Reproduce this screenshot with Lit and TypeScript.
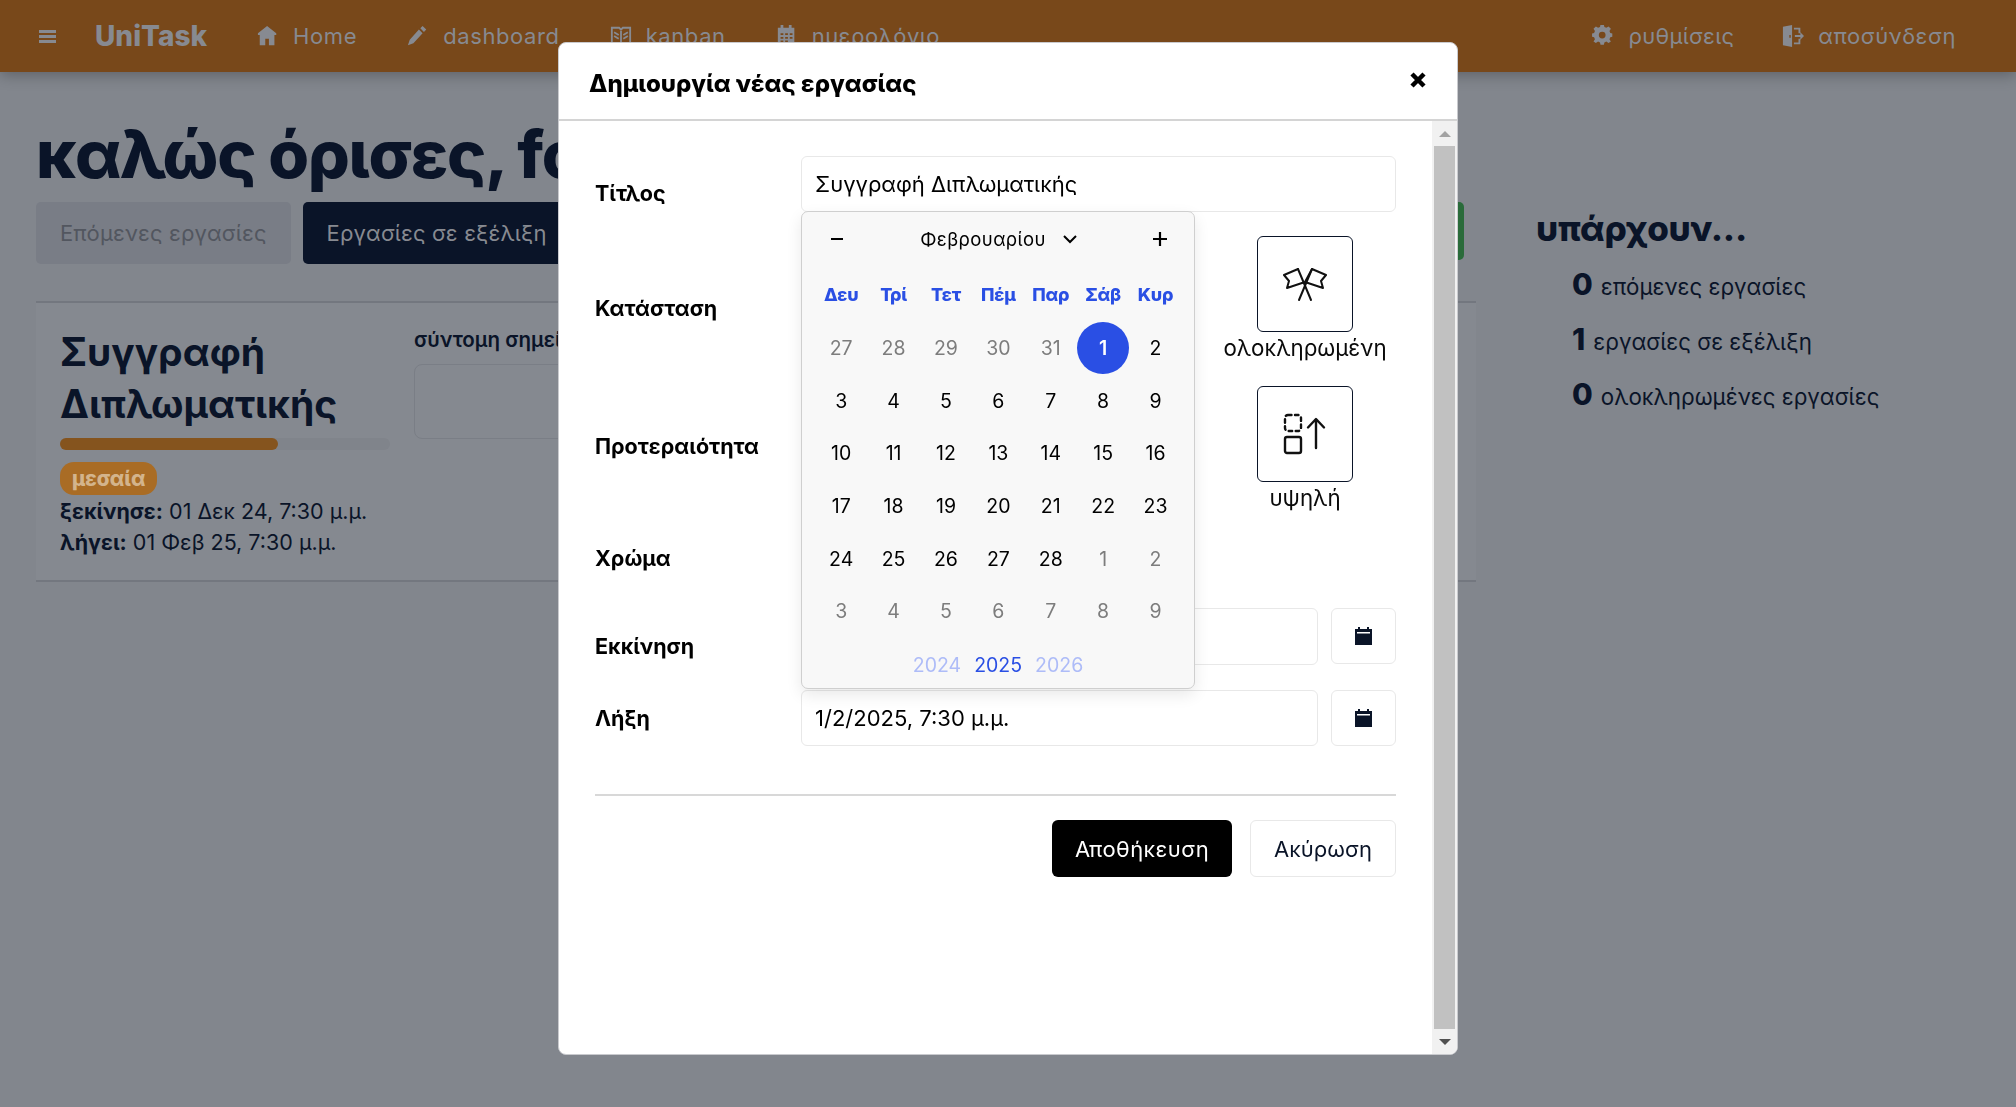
import { LitElement, html, css, svg } from 'lit';
import { customElement } from 'lit/decorators.js';
import { classMap } from 'lit/directives/class-map.js';

const FONT = css`Inter, "Noto Sans", sans-serif`;

const icons = {
  home: svg`<path d="M11 1 1 9v2h2v11h6v-7h4v7h6V11h2V9Z"/>`,
  pencil: svg`<path d="M17 1l4 4-2.5 2.5-4-4ZM13 5l4 4-10 11-6 2 2-6Z"/>`,
  book: svg`<path fill="none" stroke="currentColor" stroke-width="2" d="M2 3h8l2 2 2-2h8v18h-8l-2 1-2-1H2ZM12 5v16M4.500 8l5 3M4.500 12l5 3M19.500 8l-5 3M19.500 12l-5 3"/>`,
  calendar: svg`<path d="M5 0h3v3h6V0h3v3h3v19H2V3h3ZM5 9v2h3V9Zm5 0v2h3V9Zm5 0v2h3V9ZM5 13v2h3v-2Zm5 0v2h3v-2Zm5 0v2h3v-2ZM5 17v2h3v-2Zm5 0v2h3v-2Z"/>`,
  gear: svg`<path fill-rule="evenodd" d="M9 1h4l.6 3 2.300 1 2.600-1.700 2.800 2.800L19.600 8.700l1 2.300 2.400.6v4l-2.400.600-1 2.300 1.700 2.600-2.800 1.800-2.600-1.600-2.300 1-.6 2.700H9l-.6-2.700-2.300-1-2.600 1.600-2.800-1.800 1.700-2.600-1-2.300L-1 15.600v-4l2.400-.6 1-2.300L.7 6.100l2.800-2.800 2.600 1.700L8.400 4ZM11 9.500a4 4 0 1 0 0 8 4 4 0 0 0 0-8Z" transform="translate(1 -1.500) scale(.92 .92)"/>`,
  exit: svg`<path d="M1 2 11 0v24L1 22Zm7 9v3h1.500v-3ZM13 3h7v6h-2V5h-5ZM13 19h5v-4h2v6h-7ZM14 11h6V8l4 4-4 4v-3h-6Z"/>`,
};

const navIcon = (name: keyof typeof icons) =>
  html`<svg class="nav-icon" viewBox="0 0 24 24" fill="currentColor">${icons[name]}</svg>`;

const calendarGlyph = html`<svg class="cal-glyph" viewBox="0 0 17 18">
  <path fill="#0a1428" d="M3 0h2v2h7V0h2v2h3v16H0V2h3Z" />
  <rect x="2" y="5" width="13" height="1.500" fill="#fff" />
</svg>`;

@customElement('date-picker')
export class DatePicker extends LitElement {
  static styles = css`
    :host {
      display: block;
      box-sizing: border-box;
      width: 394px;
      height: 478px;
      padding: 0 13px;
      background: #f8f8f8;
      border: 1px solid #cfcfcf;
      border-radius: 7px;
      box-shadow: 0 6px 16px rgba(0, 0, 0, 0.09);
      font-family: ${FONT};
      color: #000;
    }
    .head {
      display: flex;
      align-items: center;
      justify-content: space-between;
      height: 54px;
      padding: 0 11px 0 12px;
      margin-bottom: 2px;
    }
    .step {
      width: 20px;
      height: 20px;
    }
    .month {
      display: flex;
      align-items: center;
      gap: 17px;
      font-size: 18.500px;
      letter-spacing: 0.4px;
    }
    .month svg {
      width: 14px;
      height: 9px;
    }
    .grid {
      display: grid;
      grid-template-columns: repeat(7, 52.400px);
      grid-template-rows: 53.500px;
      grid-auto-rows: 52.700px;
    }
    .weekday {
      display: flex;
      align-items: center;
      justify-content: center;
      height: 52px;
      font-size: 18px;
      font-weight: 800;
      color: #2a4fe4;
      letter-spacing: -0.2px;
    }
    .day {
      display: flex;
      align-items: center;
      justify-content: center;
      font-size: 19.500px;
    }
    .day.muted {
      color: #7d7d7d;
    }
    .day.selected {
      background: #2a4fe4;
      color: #fff;
      font-weight: 600;
      border-radius: 50%;
    }
    .years {
      display: flex;
      justify-content: center;
      gap: 13px;
      height: 54px;
      align-items: center;
      font-size: 19.500px;
      color: #aebcf8;
    }
    .years .current {
      color: #2a4fe4;
    }
  `;

  render() {
    const prev = [27, 28, 29, 30, 31];
    const month = Array.from({ length: 28 }, (_, i) => i + 1);
    const next = [1, 2, 3, 4, 5, 6, 7, 8, 9];
    return html`
      <div class="head">
        <svg class="step" viewBox="0 0 20 20"><path d="M4 10h12" stroke="#000" stroke-width="2.200" /></svg>
        <div class="month">
          Φεβρουαρίου
          <svg viewBox="0 0 14 9"><path d="M1 1l6 6 6-6" fill="none" stroke="#000" stroke-width="2" /></svg>
        </div>
        <svg class="step" viewBox="0 0 20 20"><path d="M3 10h14M10 3v14" stroke="#000" stroke-width="2.200" /></svg>
      </div>
      <div class="grid">
        ${['Δευ', 'Τρί', 'Τετ', 'Πέμ', 'Παρ', 'Σάβ', 'Κυρ'].map((d) => html`<div class="weekday">${d}</div>`)}
        ${prev.map((d) => html`<div class="day muted">${d}</div>`)}
        ${month.map((d) => html`<div class=${classMap({ day: true, selected: d === 1 })}>${d}</div>`)}
        ${next.map((d) => html`<div class="day muted">${d}</div>`)}
      </div>
      <div class="years">
        <span>2024</span><span class="current">2025</span><span>2026</span>
      </div>
    `;
  }
}

@customElement('app-root')
export class AppRoot extends LitElement {
  static styles = css`
    :host {
      display: block;
      font-family: ${FONT};
      color: #0a1428;
    }
    * {
      box-sizing: border-box;
    }
    .page {
      height: 1107px;
      overflow: hidden;
      background: #82868d;
    }
    .navbar {
      display: flex;
      align-items: center;
      height: 72px;
      padding: 0 60px 0 39px;
      background: #78481a;
      box-shadow: 0 3px 14px rgba(0, 0, 0, 0.28);
      color: #878a91;
      font-size: 22px;
      letter-spacing: 0.5px;
    }
    .burger {
      width: 17px;
      height: 13px;
      margin-right: 39px;
    }
    .brand {
      margin-right: 50px;
      font-size: 28px;
      font-weight: 800;
      letter-spacing: 0;
    }
    .nav-item {
      display: flex;
      align-items: center;
      gap: 14px;
      margin-right: 50px;
      white-space: nowrap;
    }
    .nav-item.latin {
      letter-spacing: 0.6px;
    }
    .nav-item.settings {
      margin-right: 48px;
      letter-spacing: 0.3px;
    }
    .nav-item.last {
      margin-right: 0;
    }
    .spacer {
      flex: 1;
    }
    .nav-icon {
      width: 22px;
      height: 22px;
    }
    .main {
      display: grid;
      grid-template-columns: 1440px 1fr;
      column-gap: 61px;
      padding: 41px 0 0 36px;
    }
    h1 {
      margin: 0 0 7px;
      font-size: 66px;
      line-height: 82px;
      font-weight: 800;
      letter-spacing: -1.300px;
      white-space: nowrap;
    }
    .tabs {
      display: flex;
      align-items: flex-start;
      gap: 12px;
      margin-bottom: 37px;
      padding-right: 12px;
    }
    .tab {
      display: flex;
      align-items: center;
      height: 62px;
      padding: 0 24px;
      border-radius: 5px;
      font-size: 22px;
      letter-spacing: 0.15px;
      white-space: nowrap;
    }
    .tab.next {
      background: #797d86;
      color: #52565f;
    }
    .tab.active {
      background: #0a1428;
      color: #878a91;
    }
    .tab.done {
      height: 58px;
      margin-left: auto;
      background: #2a6b3a;
      color: #878a91;
    }
    .card {
      display: flex;
      height: 281px;
      padding: 23px 24px;
      border-top: 2px solid #73777f;
      border-bottom: 2px solid #73777f;
      background: #858990;
    }
    .summary {
      width: 330px;
      margin-right: 24px;
    }
    .summary h2 {
      margin: 0 0 8px;
      font-size: 39px;
      line-height: 52px;
      font-weight: 700;
    }
    .track {
      height: 12px;
      margin-bottom: 12px;
      background: #80848b;
      border-radius: 6px;
    }
    .fill {
      height: 100%;
      background: #85541e;
      border-radius: 6px;
    }
    .badge {
      display: inline-block;
      height: 33px;
      padding: 0 12px;
      margin-bottom: 1px;
      border-radius: 14px;
      background: #a96c25;
      color: #d3b48c;
      font-size: 20.500px;
      line-height: 33px;
      font-weight: 800;
    }
    .date-line {
      font-size: 21.500px;
      line-height: 31px;
      white-space: nowrap;
    }
    .date-line b {
      font-weight: 700;
    }
    .note-title {
      margin-top: 1px;
      font-size: 20.500px;
      font-weight: 600;
      white-space: nowrap;
    }
    .note-box {
      width: 500px;
      height: 75px;
      margin-top: 12px;
      border: 1px solid #7a7e86;
      border-radius: 8px;
    }
    .side {
      padding-top: 93px;
      margin-left: -1px;
    }
    .side h2 {
      margin: 0 0 9px;
      font-size: 35px;
      line-height: 44px;
      font-weight: 800;
      letter-spacing: -0.3px;
    }
    .stat {
      display: flex;
      align-items: baseline;
      gap: 8px;
      height: 55px;
      padding-left: 36px;
      font-size: 22.300px;
      line-height: 50px;
      white-space: nowrap;
    }
    .stat b {
      font-size: 30px;
      font-weight: 800;
    }
    .modal-layer {
      position: fixed;
      inset: 0;
      display: flex;
      justify-content: center;
      align-items: flex-start;
      padding-top: 42px;
    }
    .modal {
      display: flex;
      flex-direction: column;
      width: 900px;
      height: 1013px;
      background: #fff;
      border: 1px solid #c9cace;
      border-radius: 8px;
      overflow: hidden;
      color: #000;
    }
    .modal-head {
      display: flex;
      align-items: flex-start;
      justify-content: space-between;
      flex: none;
      height: 78px;
      padding: 26px 29px 0 30px;
      border-bottom: 2px solid #d4d4d4;
    }
    .modal-title {
      font-size: 24px;
      line-height: 30px;
      font-weight: 800;
    }
    .close {
      width: 18px;
      height: 18px;
      margin-top: 2px;
      margin-right: 1px;
    }
    .modal-body {
      display: flex;
      flex: 1;
      min-height: 0;
    }
    .form {
      position: relative;
      flex: 1;
      padding: 35px 36px 0 36px;
    }
    .row {
      display: grid;
      grid-template-columns: 206px 1fr;
      margin-bottom: 24px;
    }
    .row.wide-gap {
      margin-bottom: 25px;
    }
    .label {
      font-size: 21.500px;
      line-height: 28px;
      font-weight: 700;
    }
    .lift-title {
      padding-top: 23px;
    }
    .lift-status {
      padding-top: 58px;
    }
    .lift-priority {
      padding-top: 46px;
    }
    .lift-color {
      padding-top: 8px;
    }
    .lift-start {
      padding-top: 24px;
    }
    .lift-end {
      padding-top: 14px;
    }
    .field {
      display: flex;
      align-items: center;
      height: 56px;
      padding: 0 13px;
      border: 1px solid #e8e8e8;
      border-radius: 6px;
      font-size: 22px;
      white-space: nowrap;
      flex: 1;
    }
    .date-row {
      display: flex;
      gap: 13px;
    }
    .date-row .tall {
      height: 57px;
    }
    .pick {
      display: flex;
      align-items: center;
      justify-content: center;
      width: 65px;
      height: 56px;
      border: 1px solid #e8e8e8;
      border-radius: 6px;
    }
    .cal-glyph {
      width: 17px;
      height: 18px;
    }
    .options {
      display: flex;
      justify-content: flex-end;
      height: 126px;
      padding-right: 9px;
    }
    .option {
      display: flex;
      flex-direction: column;
      align-items: center;
      width: 164px;
    }
    .tile {
      display: flex;
      align-items: center;
      justify-content: center;
      width: 96px;
      height: 96px;
      margin-bottom: 2px;
      border: 1.500px solid #0a1428;
      border-radius: 6px;
    }
    .tile svg {
      width: 44px;
      height: 42px;
    }
    .option-name {
      font-size: 22.300px;
      line-height: 28px;
      color: #0a0a0a;
      white-space: nowrap;
    }
    .color-slot {
      height: 48px;
    }
    hr {
      margin: 48px 0 24px;
      border: none;
      border-top: 2px solid #d8d8d8;
    }
    .actions {
      display: flex;
      justify-content: flex-end;
      gap: 18px;
    }
    .btn {
      display: flex;
      align-items: center;
      justify-content: center;
      height: 57px;
      border-radius: 6px;
      font-size: 22px;
    }
    .btn.save {
      width: 180px;
      background: #000;
      color: #fff;
      letter-spacing: 0.4px;
    }
    .btn.cancel {
      width: 146px;
      border: 1px solid #e8e8e8;
      color: #0a1428;
    }
    .popup {
      position: absolute;
      left: 242px;
      top: 90px;
    }
    .scrollbar {
      display: flex;
      flex-direction: column;
      align-items: center;
      flex: none;
      width: 25px;
      background: #f1f1f1;
    }
    .arrow {
      flex: none;
      display: flex;
      align-items: center;
      justify-content: center;
      width: 100%;
      height: 25px;
    }
    .arrow svg {
      width: 12px;
      height: 6px;
    }
    .thumb {
      flex: 1;
      width: 21px;
      background: #c1c1c1;
    }
  `;

  render() {
    return html`
      <div class="page">
        <nav class="navbar">
          <svg class="burger" viewBox="0 0 17 13" fill="currentColor">
            <rect width="17" height="3" /><rect y="5" width="17" height="3" /><rect y="10" width="17" height="3" />
          </svg>
          <div class="brand">UniTask</div>
          <div class="nav-item latin">${navIcon('home')}Home</div>
          <div class="nav-item latin">${navIcon('pencil')}dashboard</div>
          <div class="nav-item latin">${navIcon('book')}kanban</div>
          <div class="nav-item">${navIcon('calendar')}ημερολόγιο</div>
          <div class="spacer"></div>
          <div class="nav-item settings">${navIcon('gear')}ρυθμίσεις</div>
          <div class="nav-item last">${navIcon('exit')}αποσύνδεση</div>
        </nav>
        <div class="main">
          <section>
            <h1>καλώς όρισες, fo</h1>
            <div class="tabs">
              <div class="tab next">Επόμενες εργασίες</div>
              <div class="tab active">Εργασίες σε εξέλιξη</div>
              <div class="tab done">Ολοκληρωμένες εργασίες</div>
            </div>
            <article class="card">
              <div class="summary">
                <h2>Συγγραφή Διπλωματικής</h2>
                <div class="track"><div class="fill" style="width: 66%"></div></div>
                <span class="badge">μεσαία</span>
                <div class="date-line"><b>ξεκίνησε:</b> 01 Δεκ 24, 7:30 μ.μ.</div>
                <div class="date-line"><b>λήγει:</b> 01 Φεβ 25, 7:30 μ.μ.</div>
              </div>
              <div>
                <div class="note-title">σύντομη σημείωση</div>
                <div class="note-box"></div>
              </div>
            </article>
          </section>
          <aside class="side">
            <h2>υπάρχουν...</h2>
            <div class="stat"><b>0</b> επόμενες εργασίες</div>
            <div class="stat"><b>1</b> εργασίες σε εξέλιξη</div>
            <div class="stat"><b>0</b> ολοκληρωμένες εργασίες</div>
          </aside>
        </div>
      </div>

      <div class="modal-layer">
        <div class="modal">
          <header class="modal-head">
            <div class="modal-title">Δημιουργία νέας εργασίας</div>
            <svg class="close" viewBox="0 0 18 18"><path d="M3 3l12 12M15 3L3 15" stroke="#000" stroke-width="4.500" /></svg>
          </header>
          <div class="modal-body">
            <div class="form">
              <div class="row">
                <div class="label lift-title">Τίτλος</div>
                <div class="field">Συγγραφή Διπλωματικής</div>
              </div>
              <div class="row">
                <div class="label lift-status">Κατάσταση</div>
                <div class="options">
                  <div class="option">
                    <div class="tile">
                      <svg viewBox="0 0 44 42" fill="none" stroke="#111" stroke-width="2" stroke-linejoin="round" stroke-linecap="round">
                        <path d="M15 6 1 12 6 18 4 25 22 19 29 6 43 12 38 18 40 25 22 19" />
                        <path d="M15 6 28 37M29 6 16 37" />
                      </svg>
                    </div>
                    <div class="option-name">ολοκληρωμένη</div>
                  </div>
                </div>
              </div>
              <div class="row">
                <div class="label lift-priority">Προτεραιότητα</div>
                <div class="options">
                  <div class="option">
                    <div class="tile">
                      <svg viewBox="0 0 44 42" fill="none" stroke="#111" stroke-width="2.400" stroke-linecap="round" stroke-linejoin="round">
                        <rect x="2" y="2" width="16" height="16" rx="3" stroke-dasharray="3.500 3.500" />
                        <rect x="2" y="24" width="16" height="16" rx="2" />
                        <path d="M33 35V7M25 14.500 33 6l8 8.500" />
                      </svg>
                    </div>
                    <div class="option-name">υψηλή</div>
                  </div>
                </div>
              </div>
              <div class="row">
                <div class="label lift-color">Χρώμα</div>
                <div class="color-slot"></div>
              </div>
              <div class="row wide-gap">
                <div class="label lift-start">Εκκίνηση</div>
                <div class="date-row">
                  <div class="field tall">1/12/2024, 7:30 μ.μ.</div>
                  <div class="pick">${calendarGlyph}</div>
                </div>
              </div>
              <div class="row">
                <div class="label lift-end">Λήξη</div>
                <div class="date-row">
                  <div class="field">1/2/2025, 7:30 μ.μ.</div>
                  <div class="pick">${calendarGlyph}</div>
                </div>
              </div>
              <hr />
              <div class="actions">
                <div class="btn save">Αποθήκευση</div>
                <div class="btn cancel">Ακύρωση</div>
              </div>
              <date-picker class="popup"></date-picker>
            </div>
            <div class="scrollbar">
              <div class="arrow"><svg viewBox="0 0 12 6"><path d="M6 0l6 6H0Z" fill="#a3a3a3" /></svg></div>
              <div class="thumb"></div>
              <div class="arrow"><svg viewBox="0 0 12 6"><path d="M0 0h12L6 6Z" fill="#505050" /></svg></div>
            </div>
          </div>
        </div>
      </div>
    `;
  }
}
